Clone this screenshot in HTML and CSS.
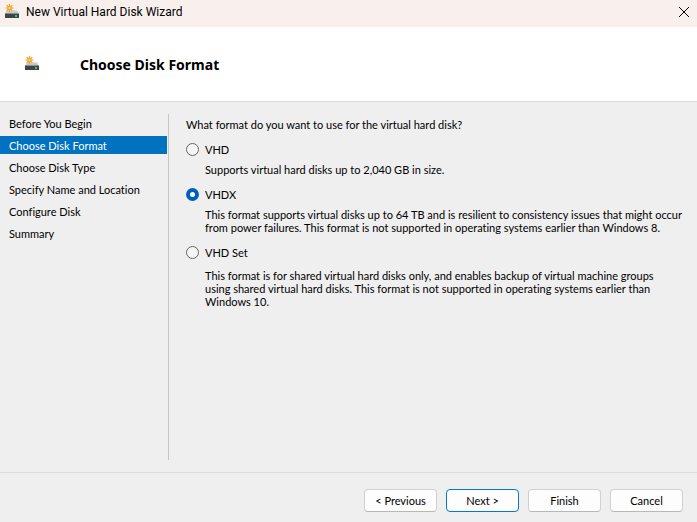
FILE: index.html
```html
<!DOCTYPE html>
<html lang="en">

<head>
    <meta charset="UTF-8">
    <meta name="viewport" content="width=device-width, initial-scale=1.0">
    <title>New Virtual Hard Disk Wizard</title>
    <link rel="stylesheet" href="styles.css">
</head>

<body>
    <!-- Disk icon shared by the title bar and the header -->
    <svg class="symbols" aria-hidden="true">
        <defs>
            <linearGradient id="diskTop" x1="0" y1="0" x2="0" y2="1">
                <stop offset="0" stop-color="#dcdee1" />
                <stop offset="1" stop-color="#b4b7bc" />
            </linearGradient>
        </defs>
        <symbol id="disk" viewBox="0 0 16 16">
            <path d="M3 6h10l2 4H1z" fill="url(#diskTop)" />
            <path d="M1 9h14v2H1z" fill="#8b9095" />
            <path d="M1 10h14v4H1z" fill="#3f4447" />
            <rect x="11" y="11" width="2" height="2" fill="#35d04a" />
            <path d="M5.5 0v8M1.5 4h8M2.7 1.2l5.6 5.6M8.3 1.2L2.7 6.8" stroke="#eda01c" stroke-width="1.2" />
            <circle cx="5.5" cy="4" r="2.2" fill="#f2a823" />
            <circle cx="5.5" cy="4" r="1" fill="#fde3a0" />
        </symbol>
    </svg>

    <div class="titlebar">
        <svg class="icon" aria-hidden="true"><use href="#disk" /></svg>
        <span class="titlebar-text">New Virtual Hard Disk Wizard</span>
        <button type="button" class="close" aria-label="Close">
            <svg viewBox="0 0 10 10" aria-hidden="true"><path d="M0 0L10 10M10 0L0 10" /></svg>
        </button>
    </div>

    <header class="header">
        <svg class="icon" aria-hidden="true"><use href="#disk" /></svg>
        <h1>Choose Disk Format</h1>
    </header>

    <main class="content">
        <nav class="steps">
            <a href="#">Before You Begin</a>
            <a href="#" class="active" aria-current="step">Choose Disk Format</a>
            <a href="#">Choose Disk Type</a>
            <a href="#">Specify Name and Location</a>
            <a href="#">Configure Disk</a>
            <a href="#">Summary</a>
        </nav>

        <form id="formatForm" class="formats">
            <p>What format do you want to use for the virtual hard disk?</p>

            <div class="option">
                <input type="radio" id="vhd" name="format" value="vhd">
                <label for="vhd">VHD</label>
            </div>
            <p class="description">Supports virtual hard disks up to 2,040 GB in size.</p>

            <div class="option">
                <input type="radio" id="vhdx" name="format" value="vhdx" checked>
                <label for="vhdx">VHDX</label>
            </div>
            <p class="description">This format supports virtual disks up to 64 TB and is resilient to consistency issues that might occur<br>
                from power failures. This format is not supported in operating systems earlier than Windows 8.</p>

            <div class="option">
                <input type="radio" id="vhdset" name="format" value="vhdset">
                <label for="vhdset">VHD Set</label>
            </div>
            <p class="description last">This format is for shared virtual hard disks only, and enables backup of virtual machine groups<br>
                using shared virtual hard disks. This format is not supported in operating systems earlier than<br>
                Windows 10.</p>
        </form>
    </main>

    <footer class="footer">
        <button type="button">&lt; Previous</button>
        <button type="submit" form="formatForm" class="default">Next &gt;</button>
        <button type="button">Finish</button>
        <button type="button">Cancel</button>
    </footer>
</body>

</html>
```

FILE: styles.css
```css
* {
    box-sizing: border-box;
}

body {
    display: flex;
    flex-direction: column;
    min-height: 100vh;
    margin: 0;
    background-color: #efefef;
    color: #000;
    font-family: Tahoma, Lato, sans-serif;
    font-size: 11px;
    font-variant-ligatures: none;
    line-height: 13px;
}

p,
h1 {
    margin: 0;
}

.symbols {
    position: absolute;
    width: 0;
    height: 0;
}

.icon {
    width: 16px;
    height: 16px;
}

/* Title bar */
.titlebar {
    display: flex;
    align-items: center;
    height: 27px;
    padding: 0 8px 3px 4px;
    background-color: #f9f0ee;
}

.titlebar-text {
    flex: 1;
    padding-left: 6px;
    font-family: "Segoe UI", Roboto, sans-serif;
    font-size: 12px;
}

.close {
    display: flex;
    padding: 0;
    border: none;
    background: none;
}

.close svg {
    width: 10px;
    height: 10px;
    overflow: visible;
    stroke: #000;
}

/* Header */
.header {
    display: flex;
    align-items: center;
    height: 75px;
    padding-left: 24px;
    border-bottom: 1px solid #dcdcdc;
    background-color: #fff;
}

.header h1 {
    padding-left: 40px;
    font-family: Tahoma, "Noto Sans", sans-serif;
    font-size: 14px;
    font-weight: bold;
}

/* Steps and options */
.content {
    display: flex;
    flex: 1;
    padding: 12px 0;
}

.steps {
    display: flex;
    flex-direction: column;
    flex-shrink: 0;
    gap: 4px;
    width: 169px;
    padding-right: 1px;
    border-right: 1px solid #c5c5c5;
}

.steps a {
    height: 18px;
    padding-left: 9px;
    color: #000;
    line-height: 20px;
    text-decoration: none;
}

.steps .active {
    background-color: #0072bf;
    color: #fff;
}

.formats {
    flex: 1;
    padding: 4px 0 0 17px;
}

.option {
    display: flex;
    align-items: center;
    gap: 6px;
    margin-top: 12px;
}

.option input {
    appearance: none;
    width: 13px;
    height: 13px;
    margin: 0;
    border: 1px solid #666;
    border-radius: 50%;
    background-color: #f5f5f5;
}

.option input:checked {
    border: 4px solid #005fb8;
    background-color: #fff;
}

.description {
    margin-top: 7px;
    padding-left: 19px;
}

.description.last {
    margin-top: 10px;
}

/* Buttons */
.footer {
    display: flex;
    justify-content: flex-end;
    gap: 9px;
    height: 50px;
    padding: 16px 14px 0;
    border-top: 1px solid #dcdcdc;
}

.footer button {
    width: 73px;
    height: 23px;
    padding: 0;
    border: 1px solid #d0d0d0;
    border-bottom-color: #b8b8b8;
    border-radius: 4px;
    background-color: #fdfdfd;
    color: #000;
    font: inherit;
}

.footer .default {
    border-color: #0078d4;
}
```
